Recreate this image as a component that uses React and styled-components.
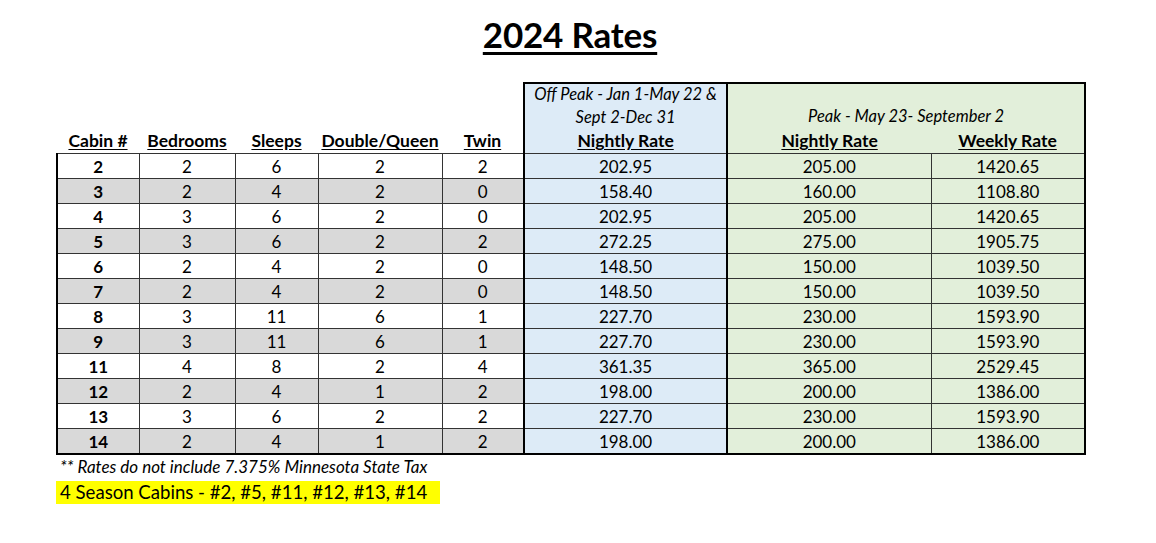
import React from 'react';
import styled, { createGlobalStyle } from 'styled-components';

const GlobalStyle = createGlobalStyle`
  html, body {
    margin: 0;
    padding: 0;
    background: #fff;
  }
  body {
    font-family: Lato, "Liberation Sans", sans-serif;
    color: #000;
  }
`;

const rows = [
  { cabin: 2, bed: 2, sleeps: 6, dq: 2, twin: 2, off: '202.95', night: '205.00', week: '1420.65' },
  { cabin: 3, bed: 2, sleeps: 4, dq: 2, twin: 0, off: '158.40', night: '160.00', week: '1108.80' },
  { cabin: 4, bed: 3, sleeps: 6, dq: 2, twin: 0, off: '202.95', night: '205.00', week: '1420.65' },
  { cabin: 5, bed: 3, sleeps: 6, dq: 2, twin: 2, off: '272.25', night: '275.00', week: '1905.75' },
  { cabin: 6, bed: 2, sleeps: 4, dq: 2, twin: 0, off: '148.50', night: '150.00', week: '1039.50' },
  { cabin: 7, bed: 2, sleeps: 4, dq: 2, twin: 0, off: '148.50', night: '150.00', week: '1039.50' },
  { cabin: 8, bed: 3, sleeps: 11, dq: 6, twin: 1, off: '227.70', night: '230.00', week: '1593.90' },
  { cabin: 9, bed: 3, sleeps: 11, dq: 6, twin: 1, off: '227.70', night: '230.00', week: '1593.90' },
  { cabin: 11, bed: 4, sleeps: 8, dq: 2, twin: 4, off: '361.35', night: '365.00', week: '2529.45' },
  { cabin: 12, bed: 2, sleeps: 4, dq: 1, twin: 2, off: '198.00', night: '200.00', week: '1386.00' },
  { cabin: 13, bed: 3, sleeps: 6, dq: 2, twin: 2, off: '227.70', night: '230.00', week: '1593.90' },
  { cabin: 14, bed: 2, sleeps: 4, dq: 1, twin: 2, off: '198.00', night: '200.00', week: '1386.00' },
];

const colWidths = [82, 96, 83, 124, 82, 203, 204, 154];

const Page = styled.div`
  padding: 0 0 0 56px;
  width: 1028px;
`;

const Title = styled.h1`
  margin: 0;
  padding-top: 14px;
  height: 82px;
  box-sizing: border-box;
  text-align: center;
  font-size: 35px;
  line-height: 40px;
  font-weight: 700;
  text-decoration: underline;
  text-decoration-thickness: 3px;
  text-underline-offset: 4px;
  letter-spacing: -0.2px;
`;

const Table = styled.table`
  border-collapse: collapse;
  table-layout: fixed;
  width: 1028px;
  font-size: 17.5px;
`;

const bgFor = (tone) =>
  tone === 'blue' ? '#ddebf7' : tone === 'green' ? '#e2efda' : tone === 'gray' ? '#d9d9d9' : 'transparent';

const HeadCell = styled.th`
  height: ${(p) => p.$h || 23}px;
  padding: 0;
  text-align: center;
  vertical-align: ${(p) => p.$valign || 'middle'};
  font-size: ${(p) => (p.$italic ? '16.5px' : '17.5px')};
  font-weight: ${(p) => (p.$italic ? 400 : 700)};
  font-style: ${(p) => (p.$italic ? 'italic' : 'normal')};
  text-decoration: ${(p) => (p.$italic ? 'none' : 'underline')};
  text-underline-offset: 2px;
  background: ${(p) => bgFor(p.$tone)};
  border-top: ${(p) => (p.$top ? '2px solid #000' : 'none')};
  border-left: ${(p) => (p.$left ? '2px solid #000' : 'none')};
  border-right: ${(p) => (p.$right ? '2px solid #000' : 'none')};
  border-bottom: ${(p) => (p.$bottom ? '1px solid #333' : 'none')};
  white-space: nowrap;
  line-height: 1;
  padding-bottom: ${(p) => (p.$valign === 'bottom' ? '5px' : '0')};
`;

const Cell = styled.td`
  height: 24px;
  padding: 0;
  text-align: center;
  font-size: 17px;
  font-weight: ${(p) => (p.$bold ? 700 : 400)};
  background: ${(p) => bgFor(p.$tone)};
  border: 1px solid #333;
  border-left: ${(p) => (p.$thickLeft ? '2px solid #000' : '1px solid #333')};
  border-right: ${(p) => (p.$thickRight ? '2px solid #000' : '1px solid #333')};
  border-bottom: ${(p) => (p.$last ? '2px solid #000' : '1px solid #333')};
  line-height: 1;
`;

const Note = styled.div`
  margin-top: 1px;
  padding-left: 4px;
  font-size: 17px;
  font-style: italic;
  height: 22px;
  line-height: 22px;
`;

const Highlight = styled.div`
  margin-top: 3px;
  width: 384px;
  height: 23px;
  line-height: 23px;
  background: #ffff00;
  font-size: 18.6px;
  padding-left: 4px;
  box-sizing: border-box;
  white-space: nowrap;
`;

export default function App() {
  return (
    <>
      <GlobalStyle />
      <Page>
        <Title>2024 Rates</Title>
        <Table>
          <colgroup>
            {colWidths.map((w, i) => (
              <col key={i} style={{ width: w }} />
            ))}
          </colgroup>
          <thead>
            <tr>
              <HeadCell $h={21} colSpan={5} />
              <HeadCell $h={21} $italic $tone="blue" $top $left $right>
                Off Peak - Jan 1-May 22 &amp;
              </HeadCell>
              <HeadCell $italic $tone="green" $top $right colSpan={2} rowSpan={2} $valign="bottom">
                Peak - May 23- September 2
              </HeadCell>
            </tr>
            <tr>
              <HeadCell $h={24} colSpan={5} />
              <HeadCell $h={24} $italic $tone="blue" $left $right>
                Sept 2-Dec 31
              </HeadCell>
            </tr>
            <tr>
              <HeadCell $h={24} $bottom>Cabin #</HeadCell>
              <HeadCell $h={24} $bottom>Bedrooms</HeadCell>
              <HeadCell $h={24} $bottom>Sleeps</HeadCell>
              <HeadCell $h={24} $bottom>Double/Queen</HeadCell>
              <HeadCell $h={24} $bottom>Twin</HeadCell>
              <HeadCell $h={24} $bottom $tone="blue" $left $right>Nightly Rate</HeadCell>
              <HeadCell $h={24} $bottom $tone="green">Nightly Rate</HeadCell>
              <HeadCell $h={24} $bottom $tone="green" $right>Weekly Rate</HeadCell>
            </tr>
          </thead>
          <tbody>
            {rows.map((r, i) => {
              const tone = i % 2 === 1 ? 'gray' : 'white';
              const last = i === rows.length - 1;
              return (
                <tr key={r.cabin}>
                  <Cell $bold $tone={tone} $thickLeft $last={last}>{r.cabin}</Cell>
                  <Cell $tone={tone} $last={last}>{r.bed}</Cell>
                  <Cell $tone={tone} $last={last}>{r.sleeps}</Cell>
                  <Cell $tone={tone} $last={last}>{r.dq}</Cell>
                  <Cell $tone={tone} $last={last}>{r.twin}</Cell>
                  <Cell $tone="blue" $thickLeft $thickRight $last={last}>{r.off}</Cell>
                  <Cell $tone="green" $last={last}>{r.night}</Cell>
                  <Cell $tone="green" $thickRight $last={last}>{r.week}</Cell>
                </tr>
              );
            })}
          </tbody>
        </Table>
        <Note>** Rates do not include 7.375% Minnesota State Tax</Note>
        <Highlight>4 Season Cabins - #2, #5, #11, #12, #13, #14</Highlight>
      </Page>
    </>
  );
}
